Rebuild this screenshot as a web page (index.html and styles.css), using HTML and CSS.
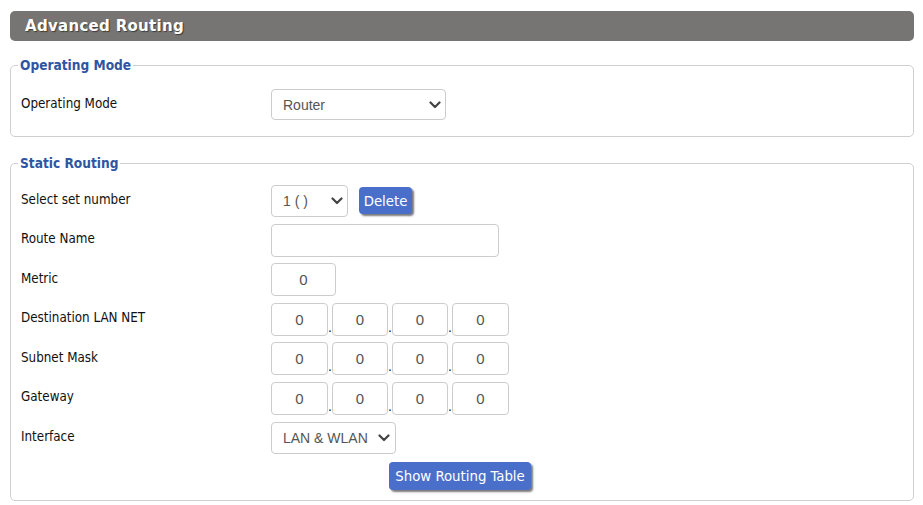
FILE: index.html
```html
<!DOCTYPE html>
<html>
<head>
<meta charset="utf-8">
<link rel="stylesheet" href="styles.css">
</head>
<body>
<div class="page">
  <div class="title-bar">Advanced Routing</div>

  <fieldset class="group group-mode">
    <legend>Operating Mode</legend>
    <div class="row">
      <label class="row-label">Operating Mode</label>
      <div class="row-field">
        <span class="select-wrap sel-mode">
          <select><option>Router</option></select>
          <svg class="chev" viewBox="0 0 12 8"><path d="M1.5 1.5 L6 6 L10.5 1.5" /></svg>
        </span>
      </div>
    </div>
  </fieldset>

  <fieldset class="group group-static">
    <legend>Static Routing</legend>
    <div class="row">
      <label class="row-label">Select set number</label>
      <div class="row-field">
        <span class="select-wrap sel-set">
          <select><option>1 ( )</option></select>
          <svg class="chev" viewBox="0 0 12 8"><path d="M1.5 1.5 L6 6 L10.5 1.5" /></svg>
        </span>
        <button class="btn btn-delete">Delete</button>
      </div>
    </div>
    <div class="row">
      <label class="row-label">Route Name</label>
      <div class="row-field"><input class="txt txt-name" type="text" value=""></div>
    </div>
    <div class="row">
      <label class="row-label">Metric</label>
      <div class="row-field"><input class="txt txt-metric" type="text" value="0"></div>
    </div>
    <div class="row">
      <label class="row-label">Destination LAN NET</label>
      <div class="row-field ip">
        <input class="txt octet" type="text" value="0"><span class="dot">.</span><input class="txt octet o2" type="text" value="0"><span class="dot">.</span><input class="txt octet o2" type="text" value="0"><span class="dot">.</span><input class="txt octet" type="text" value="0">
      </div>
    </div>
    <div class="row">
      <label class="row-label">Subnet Mask</label>
      <div class="row-field ip">
        <input class="txt octet" type="text" value="0"><span class="dot">.</span><input class="txt octet o2" type="text" value="0"><span class="dot">.</span><input class="txt octet o2" type="text" value="0"><span class="dot">.</span><input class="txt octet" type="text" value="0">
      </div>
    </div>
    <div class="row">
      <label class="row-label">Gateway</label>
      <div class="row-field ip">
        <input class="txt octet" type="text" value="0"><span class="dot">.</span><input class="txt octet o2" type="text" value="0"><span class="dot">.</span><input class="txt octet o2" type="text" value="0"><span class="dot">.</span><input class="txt octet" type="text" value="0">
      </div>
    </div>
    <div class="row">
      <label class="row-label">Interface</label>
      <div class="row-field">
        <span class="select-wrap sel-if">
          <select><option>LAN &amp; WLAN</option></select>
          <svg class="chev" viewBox="0 0 12 8"><path d="M1.5 1.5 L6 6 L10.5 1.5" /></svg>
        </span>
      </div>
    </div>
    <div class="actions">
      <button class="btn btn-table">Show Routing Table</button>
    </div>
  </fieldset>
</div>
</body>
</html>
```
FILE: styles.css
```css
* { box-sizing: border-box; }

html, body {
  margin: 0;
  padding: 0;
  background: #ffffff;
}

body {
  font-family: "DejaVu Sans Condensed", "DejaVu Sans", sans-serif;
  font-stretch: condensed;
  font-size: 13.3px;
  color: #111;
}

.page {
  width: 904px;
  margin-left: 10px;
  padding-top: 11px;
}

.title-bar {
  height: 30px;
  background: #777573;
  border-radius: 5px;
  color: #fff;
  font-family: "DejaVu Sans", sans-serif;
  font-stretch: normal;
  font-weight: bold;
  font-size: 15px;
  letter-spacing: 0.3px;
  line-height: 30px;
  padding-left: 15px;
  text-shadow: 1px 1px 1px #3d3b3a;
}

.group {
  margin: 0;
  border: 1px solid #cfcfcf;
  border-radius: 5px;
  padding: 0 10px;
}

.group legend {
  padding: 0 2px;
  margin-left: -3px;
  line-height: 16px;
  font-weight: bold;
  font-size: 13.6px;
  color: #2e55a3;
}

.group-mode {
  margin-top: 16px;
  padding-top: 16px;
  padding-bottom: 17px;
}

.group-static {
  margin-top: 18px;
  padding-top: 10px;
  padding-bottom: 10px;
}

.row {
  display: grid;
  grid-template-columns: 250px 1fr;
  align-items: center;
}

.group-static .row {
  height: 39.5px;
}

.group-mode .row {
  height: 30px;
}

.row-label {
  padding-bottom: 3px;
}

.row-field {
  display: flex;
  align-items: center;
}

.select-wrap {
  position: relative;
  display: inline-block;
}

.select-wrap select {
  appearance: none;
  -webkit-appearance: none;
  display: block;
  width: 100%;
  background: #fff;
  border: 1px solid #cccccc;
  border-radius: 4px;
  font-family: "Liberation Sans", Arial, sans-serif;
  font-size: 14px;
  color: #555;
  padding: 0 0 0 11px;
  outline: none;
}

.chev {
  position: absolute;
  top: 50%;
  width: 12px;
  height: 8px;
  margin-top: -4px;
  fill: none;
  stroke: #444;
  stroke-width: 2.2;
  stroke-linecap: round;
  stroke-linejoin: round;
  pointer-events: none;
}

.sel-mode { width: 175px; }
.sel-mode select { height: 31px; }
.sel-mode .chev { right: 5px; }

.sel-set { width: 77px; }
.sel-set select { height: 32px; }
.sel-set .chev { right: 5px; }

.sel-if { width: 125px; }
.sel-if select { height: 32px; }
.sel-if .chev { right: 6px; }

.txt {
  height: 33px;
  border: 1px solid #cccccc;
  border-radius: 4px;
  background: #fff;
  font-family: "Liberation Sans", Arial, sans-serif;
  font-size: 15px;
  color: #555;
  outline: none;
  padding: 0;
}

.txt-name { width: 228px; }
.txt-metric { width: 65px; text-align: center; }

.octet {
  width: 57px;
  text-align: center;
}
.octet.o2 { width: 56px; }

.dot {
  width: 4px;
  text-align: center;
  align-self: flex-end;
  font-family: "Liberation Sans", Arial, sans-serif;
  font-size: 14px;
  line-height: 14px;
  padding-bottom: 2px;
  color: #222;
}

.btn {
  background: #4a6fca;
  color: #fff;
  border: none;
  border-radius: 4px;
  font-family: "DejaVu Sans Condensed", "DejaVu Sans", sans-serif;
  font-stretch: condensed;
  font-size: 14.8px;
  box-shadow: 2px 2px 2px #7a7a7a;
  padding: 0;
  cursor: pointer;
}

.btn-delete {
  width: 53px;
  height: 27px;
  margin-left: 11px;
}

.actions {
  display: flex;
  justify-content: center;
  padding-top: 4px;
  padding-left: 0;
}

.btn-table {
  width: 142px;
  height: 28px;
  margin-left: -4px;
}
```
